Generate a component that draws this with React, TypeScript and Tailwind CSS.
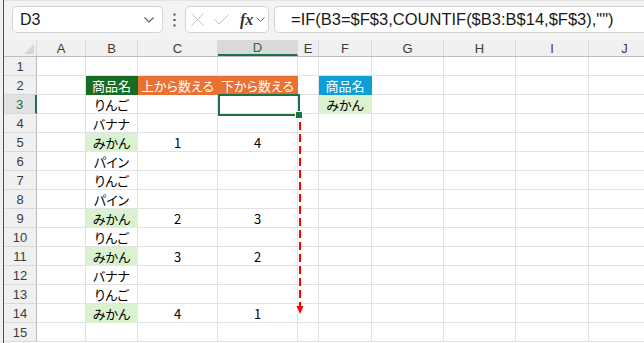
import React from "react";

type Cell = { t?: string; kind?: "g" | "o" | "b" | "l" | "n" };

const colDefs = [
  { l: "A", w: "w-[49px]" },
  { l: "B", w: "w-[52px]" },
  { l: "C", w: "w-[80px]" },
  { l: "D", w: "w-[80px]" },
  { l: "E", w: "w-[21px]" },
  { l: "F", w: "w-[53px]" },
  { l: "G", w: "w-[72px]" },
  { l: "H", w: "w-[72px]" },
  { l: "I", w: "w-[73px]" },
  { l: "J", w: "w-[72px]" },
];

const rows: Record<number, Record<number, Cell>> = {
  2: { 1: { t: "商品名", kind: "g" }, 2: { t: "上から数える", kind: "o" }, 3: { t: "下から数える", kind: "o" }, 5: { t: "商品名", kind: "b" } },
  3: { 1: { t: "りんご" }, 5: { t: "みかん", kind: "l" } },
  4: { 1: { t: "バナナ" } },
  5: { 1: { t: "みかん", kind: "l" }, 2: { t: "1" }, 3: { t: "4" } },
  6: { 1: { t: "パイン" } },
  7: { 1: { t: "りんご" } },
  8: { 1: { t: "パイン" } },
  9: { 1: { t: "みかん", kind: "l" }, 2: { t: "2" }, 3: { t: "3" } },
  10: { 1: { t: "りんご" } },
  11: { 1: { t: "みかん", kind: "l" }, 2: { t: "3" }, 3: { t: "2" } },
  12: { 1: { t: "バナナ" } },
  13: { 1: { t: "りんご" } },
  14: { 1: { t: "みかん", kind: "l" }, 2: { t: "4" }, 3: { t: "1" } },
  15: {},
  1: {},
};

function cellClass(kind?: string) {
  switch (kind) {
    case "g":
      return "bg-[#196B24] text-white border-[#196B24]";
    case "o":
      return "bg-[#E97132] text-white border-[#E97132]";
    case "b":
      return "bg-[#0F9ED5] text-white border-[#0F9ED5]";
    case "l":
      return "bg-[#DAF2D0] text-black border-[#DAF2D0]";
    default:
      return "text-black border-[#e1e1e1]";
  }
}

export default function App() {
  const rowNums = Array.from({ length: 15 }, (_, i) => i + 1);
  return (
    <div className="relative w-[644px] h-[343px] overflow-hidden bg-[#f3f3f3] flex font-['Liberation_Sans',sans-serif]">
      <div className="w-[3px] shrink-0 bg-[#f0f0f0]" />
      <div className="flex-1 flex flex-col border-l border-[#1e6b41] min-w-0">
        {/* toolbar */}
        <div className="h-[40px] shrink-0 flex items-start pt-[5px] pl-[8px] border-t border-[#e3e3e3] bg-[#f3f3f3]">
          <div className="w-[151px] h-[27px] rounded-[5px] border border-[#d4d4d4] bg-white flex items-center justify-between pl-[7px] pr-[8px]">
            <span className="text-[16px] text-[#1a1a1a] leading-none">D3</span>
            <svg width="10" height="6" viewBox="0 0 10 6" fill="none">
              <path d="M0.5 0.5 L5 5 L9.5 0.5" stroke="#555" strokeWidth="1.1" />
            </svg>
          </div>
          <div className="w-[22px] h-[27px] flex items-center justify-center">
            <svg width="3" height="14" viewBox="0 0 3 14">
              <rect x="0.5" y="0.5" width="2" height="2" fill="#444" />
              <rect x="0.5" y="6" width="2" height="2" fill="#444" />
              <rect x="0.5" y="11.5" width="2" height="2" fill="#444" />
            </svg>
          </div>
          <div className="w-[84px] h-[27px] rounded-[5px] border border-[#d4d4d4] bg-white flex items-center pl-[5px]">
            <svg width="13" height="13" viewBox="0 0 13 13" fill="none">
              <path d="M0.5 0.5 L12.5 12.5 M12.5 0.5 L0.5 12.5" stroke="#c2c2c2" strokeWidth="1" />
            </svg>
            <svg className="ml-[10px]" width="15" height="11" viewBox="0 0 15 11" fill="none">
              <path d="M0.5 5.5 L5 10 L14.5 0.5" stroke="#c2c2c2" strokeWidth="1" />
            </svg>
            <span className="ml-[11px] text-[16px] leading-none text-[#333] italic font-bold font-['Liberation_Serif',serif]">fx</span>
            <svg className="ml-[3px]" width="9" height="5" viewBox="0 0 9 5" fill="none">
              <path d="M0.5 0.5 L4.5 4.5 L8.5 0.5" stroke="#666" strokeWidth="1" />
            </svg>
          </div>
          <div className="ml-[5px] flex-1 h-[27px] rounded-l-[5px] border border-r-0 border-[#d4d4d4] bg-white flex items-center pl-[16px]">
            <span className="text-[16.5px] leading-none text-[#1a1a1a] whitespace-nowrap">
              =IF(B3=$F$3,COUNTIF($B3:B$14,$F$3),"")
            </span>
          </div>
        </div>

        {/* sheet */}
        <div className="flex-1 bg-white flex flex-col">
          {/* column headers */}
          <div className="flex h-[17px] shrink-0 bg-[#f0f0f0] border-b border-[#bdbdbd]">
            <div className="w-[33px] shrink-0 border-r border-[#d8d8d8] flex items-end justify-end pr-[2px] pb-[2px]">
              <svg width="10" height="10" viewBox="0 0 10 10">
                <path d="M10 0 L10 10 L0 10 Z" fill="#d6d6d6" />
              </svg>
            </div>
            {colDefs.map((c, i) => (
              <div
                key={c.l}
                className={`${c.w} shrink-0 border-r border-[#d8d8d8] flex items-center justify-center text-[13px] leading-none ${
                  i === 3 ? "bg-[#d9d9d9] text-[#1e6b41] border-b-2 border-b-[#1e7145]" : "text-[#3c3c3c]"
                }`}
              >
                {c.l}
              </div>
            ))}
          </div>
          {rowNums.map((r) => {
            const data = rows[r] || {};
            const sel = r === 3;
            return (
              <div key={r} className="flex h-[19px] shrink-0">
                <div
                  className={`w-[33px] shrink-0 flex items-center justify-center text-[13px] leading-none border-b ${
                    sel
                      ? "bg-[#e1e1e1] text-[#1e6b41] border-r-2 border-r-[#1e7145] border-b-[#d8d8d8]"
                      : "bg-[#f0f0f0] text-[#3c3c3c] border-r border-r-[#bdbdbd] border-b-[#d8d8d8]"
                  }`}
                >
                  {r}
                </div>
                {colDefs.map((c, i) => {
                  const cell = data[i];
                  return (
                    <div
                      key={c.l}
                      className={`${c.w} shrink-0 border-r border-b flex items-center justify-center text-[13px] leading-none whitespace-nowrap font-['Noto_Sans_CJK_JP',sans-serif] [font-feature-settings:'palt'] ${cellClass(
                        cell?.kind
                      )}`}
                    >
                      {cell?.t}
                    </div>
                  );
                })}
              </div>
            );
          })}
        </div>
      </div>

      {/* selection */}
      <div className="absolute left-[218px] top-[94px] w-[82px] h-[22px] border-2 border-[#1e7145]" />
      <div className="absolute left-[295px] top-[111px] w-[6px] h-[6px] bg-[#1e7145] border border-white box-content" />

      {/* red dashed arrow */}
      <svg className="absolute left-[294px] top-[120px]" width="12" height="196" viewBox="0 0 12 196" fill="none">
        <line x1="6" y1="2" x2="6" y2="186" stroke="#ff0000" strokeWidth="2" strokeDasharray="8 4" />
        <path d="M2.5 186 L9.5 186 L6 194 Z" fill="#ff0000" />
      </svg>
    </div>
  );
}
